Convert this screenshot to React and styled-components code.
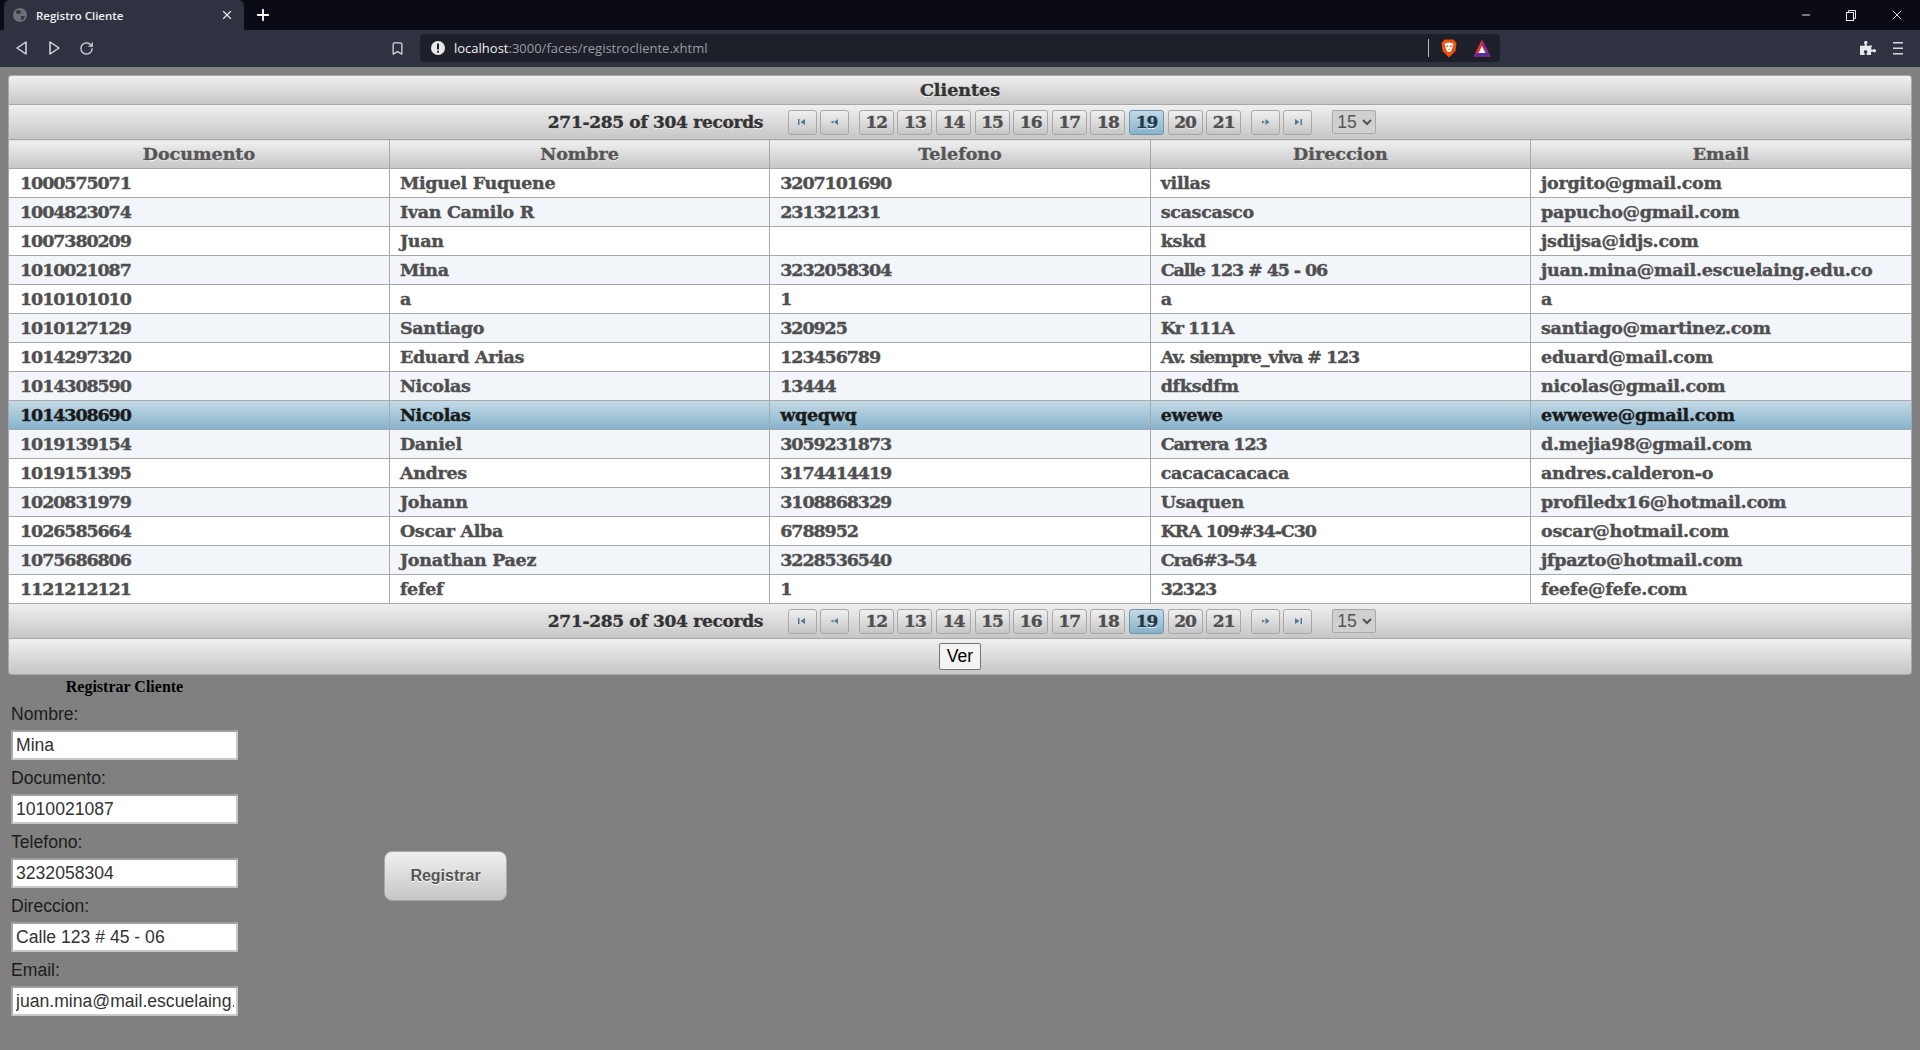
import React from "react";
import styled, { createGlobalStyle } from "styled-components";
import { X, Plus, RotateCw, Bookmark, Minus } from "lucide-react";
import { FaPuzzlePiece } from "react-icons/fa";

const GlobalStyle = createGlobalStyle`
  html, body {
    margin: 0;
    padding: 0;
    height: 100%;
    background: #808080;
    overflow: hidden;
  }
`;

const clients = [
  ["1000575071", "Miguel Fuquene", "3207101690", "villas", "jorgito@gmail.com"],
  ["1004823074", "Ivan Camilo R", "231321231", "scascasco", "papucho@gmail.com"],
  ["1007380209", "Juan", "", "kskd", "jsdijsa@idjs.com"],
  ["1010021087", "Mina", "3232058304", "Calle 123 # 45 - 06", "juan.mina@mail.escuelaing.edu.co"],
  ["1010101010", "a", "1", "a", "a"],
  ["1010127129", "Santiago", "320925", "Kr 111A", "santiago@martinez.com"],
  ["1014297320", "Eduard Arias", "123456789", "Av. siempre_viva # 123", "eduard@mail.com"],
  ["1014308590", "Nicolas", "13444", "dfksdfm", "nicolas@gmail.com"],
  ["1014308690", "Nicolas", "wqeqwq", "ewewe", "ewwewe@gmail.com"],
  ["1019139154", "Daniel", "3059231873", "Carrera 123", "d.mejia98@gmail.com"],
  ["1019151395", "Andres", "3174414419", "cacacacacaca", "andres.calderon-o"],
  ["1020831979", "Johann", "3108868329", "Usaquen", "profiledx16@hotmail.com"],
  ["1026585664", "Oscar Alba", "6788952", "KRA 109#34-C30", "oscar@hotmail.com"],
  ["1075686806", "Jonathan Paez", "3228536540", "Cra6#3-54", "jfpazto@hotmail.com"],
  ["1121212121", "fefef", "1", "32323", "feefe@fefe.com"],
];

const columns = ["Documento", "Nombre", "Telefono", "Direccion", "Email"];
const pages = [12, 13, 14, 15, 16, 17, 18, 19, 20, 21];
const fields = [
  ["Nombre:", "Mina"],
  ["Documento:", "1010021087"],
  ["Telefono:", "3232058304"],
  ["Direccion:", "Calle 123 # 45 - 06"],
  ["Email:", "juan.mina@mail.escuelaing.edu.co"],
];

const fatFont = `"DejaVu Serif", "Liberation Serif", serif`;
const barGradient = `linear-gradient(to bottom, #f0f0f0, #c6c6c6)`;

// digits in the original font are much narrower than its letters
const hasNarrowDigits = (value) => /\d/.test(value) && !value.includes("@");

function TriangleIcon({ flip }) {
  return (
    <svg width="14" height="16" viewBox="0 0 14 16" fill="none" stroke="#d8dae0" strokeWidth="1.5">
      <path d={flip ? "M3 2 L12 8 L3 14 Z" : "M11 2 L2 8 L11 14 Z"} strokeLinejoin="round" />
    </svg>
  );
}

function GlobeIcon() {
  return (
    <svg width="14" height="14" viewBox="0 0 14 14">
      <circle cx="7" cy="7" r="7" fill="#6d6f78" />
      <path d="M4 2 L8 3 L7 6 L4 6 L3 4 Z M8 8 L12 8 L10 12 L8 12 Z" fill="#33353f" />
    </svg>
  );
}

function InfoIcon() {
  return (
    <svg width="14" height="14" viewBox="0 0 14 14">
      <circle cx="7" cy="7" r="7" fill="#e8e8ea" />
      <rect x="6" y="2.5" width="2" height="6" rx="0.6" fill="#1d1f29" />
      <rect x="6" y="9.7" width="2" height="2" rx="0.6" fill="#1d1f29" />
    </svg>
  );
}

function LionIcon() {
  return (
    <svg width="16" height="19" viewBox="0 0 16 19">
      <path d="M3.5 0.5 H12.5 L15.5 4 L14.5 12 L8 18.5 L1.5 12 L0.5 4 Z" fill="#f0500f" />
      <path d="M3.5 4.5 L8 3.5 L12.5 4.5 L11 10 L9.5 13 H6.5 L5 10 Z" fill="#fff" />
      <path d="M5.5 6.5 H7.2 V8 H5.5 Z M8.8 6.5 H10.5 V8 H8.8 Z M7 10 H9 L8 11.5 Z" fill="#f0500f" />
    </svg>
  );
}

function RewardsIcon() {
  return (
    <svg width="18" height="18" viewBox="0 0 18 18">
      <path d="M9 0.5 L17.5 17.5 H0.5 Z" fill="#e8352e" />
      <path d="M9 0.5 L17.5 17.5 H11.5 L9 6 Z" fill="#8a2a8c" />
      <path d="M0.5 17.5 L2.5 14 H15.5 L17.5 17.5 Z" fill="#5e2a9c" />
      <path d="M9 7 L12.4 14 H5.6 Z" fill="#fff" />
    </svg>
  );
}

function RestoreIcon() {
  return (
    <svg width="10" height="11" viewBox="0 0 10 11" fill="none" stroke="#e8e8ea">
      <rect x="0.5" y="2.5" width="7" height="8" />
      <path d="M2.5 2.5 V0.5 H9.5 V8.5 H7.5" />
    </svg>
  );
}

function MenuIcon() {
  return (
    <svg width="10" height="13" viewBox="0 0 10 13" fill="#d8dae0">
      <rect y="0" width="10" height="1.5" />
      <rect y="5.5" width="10" height="1.5" />
      <rect y="11" width="10" height="1.5" />
    </svg>
  );
}

function SeekIcon({ kind }) {
  const paths = {
    first: "M2 2 H3.5 V8 H2 Z M9 2 V8 L4.5 5 Z",
    prev: "M10 2 V8 L6 5 Z M5.5 3.5 V6.5 L2.5 5 Z",
    next: "M2 3.5 V6.5 L5 5 Z M5.5 2 V8 L9.5 5 Z",
    last: "M3 2 V8 L7.5 5 Z M8.5 2 H10 V8 H8.5 Z",
  };
  return (
    <svg width="12" height="10" viewBox="0 0 12 10">
      <path d={paths[kind]} fill="#4d7a99" />
    </svg>
  );
}

function Paginator() {
  return (
    <PagerBar>
      <Records>271-285 of 304 records</Records>
      <NavGroup>
        <NavButton><SeekIcon kind="first" /></NavButton>
        <NavButton><SeekIcon kind="prev" /></NavButton>
      </NavGroup>
      <PageGroup>
        {pages.map((p) => (
          <PageButton key={p} $active={p === 19}>{p}</PageButton>
        ))}
      </PageGroup>
      <NavGroup>
        <NavButton><SeekIcon kind="next" /></NavButton>
        <NavButton><SeekIcon kind="last" /></NavButton>
      </NavGroup>
      <RowsSelect defaultValue="15">
        <option>5</option>
        <option>15</option>
        <option>30</option>
      </RowsSelect>
    </PagerBar>
  );
}

function App() {
  return (
    <>
      <GlobalStyle />
      <Browser>
        <TabStrip>
          <Tab>
            <GlobeIcon />
            <TabTitle>Registro Cliente</TabTitle>
            <X size={14} color="#e8e8ea" />
          </Tab>
          <NewTab><Plus size={18} color="#fff" strokeWidth={2.4} /></NewTab>
          <WindowControls>
            <Minus size={12} color="#e8e8ea" />
            <RestoreIcon />
            <X size={16} color="#e8e8ea" strokeWidth={1.4} />
          </WindowControls>
        </TabStrip>
        <Toolbar>
          <NavIcons>
            <TriangleIcon />
            <TriangleIcon flip />
            <RotateCw size={15} color="#d8dae0" />
          </NavIcons>
          <BookmarkSlot><Bookmark size={15} color="#d8dae0" /></BookmarkSlot>
          <UrlBar>
            <InfoIcon />
            <UrlText>localhost<UrlRest>:3000/faces/registrocliente.xhtml</UrlRest></UrlText>
            <UrlDivider />
            <LionIcon />
            <RewardsSlot><RewardsIcon /></RewardsSlot>
          </UrlBar>
          <ToolbarRight>
            <FaPuzzlePiece size={16} color="#e8e8ea" />
            <MenuIcon />
          </ToolbarRight>
        </Toolbar>
      </Browser>

      <Page>
        <Panel>
          <PanelTitle>Clientes</PanelTitle>
          <Paginator />
          <Table>
            <thead>
              <tr>
                {columns.map((c) => <HeadCell key={c}>{c}</HeadCell>)}
              </tr>
            </thead>
            <tbody>
              {clients.map((row, i) => (
                <Row key={row[0]} $even={i % 2 === 1} $selected={row[0] === "1014308690"}>
                  {row.map((value, j) => <Cell key={j} $tight={hasNarrowDigits(value)}>{value}</Cell>)}
                </Row>
              ))}
            </tbody>
          </Table>
          <Paginator />
          <PanelFooter><VerButton>Ver</VerButton></PanelFooter>
        </Panel>

        <FormArea>
          <FormColumn>
            <FormTitle>Registrar Cliente</FormTitle>
            {fields.map(([label, value]) => (
              <Field key={label}>
                <FieldLabel>{label}</FieldLabel>
                <FieldInput readOnly defaultValue={value} />
              </Field>
            ))}
          </FormColumn>
          <RegisterButton>Registrar</RegisterButton>
        </FormArea>
      </Page>
    </>
  );
}

const Browser = styled.header`
  display: flex;
  flex-direction: column;
  font-family: "Open Sans", "Noto Sans", sans-serif;
`;

const TabStrip = styled.div`
  height: 30px;
  background: #0a0b15;
  display: flex;
  align-items: flex-end;
  padding-left: 4px;
`;

const Tab = styled.div`
  width: 240px;
  height: 30px;
  box-sizing: border-box;
  background: #2f3241;
  border-radius: 6px 6px 0 0;
  display: flex;
  align-items: center;
  padding: 0 10px 0 9px;
  gap: 9px;
`;

const TabTitle = styled.span`
  flex: 1;
  color: #f0f0f2;
  font-size: 11.5px;
  font-weight: 600;
`;

const NewTab = styled.div`
  width: 38px;
  height: 30px;
  display: flex;
  align-items: center;
  justify-content: center;
`;

const WindowControls = styled.div`
  margin-left: auto;
  height: 30px;
  width: 120px;
  padding-right: 15px;
  box-sizing: border-box;
  display: flex;
  align-items: center;
  justify-content: space-between;
`;

const Toolbar = styled.div`
  height: 37px;
  background: #2f3241;
  display: flex;
  align-items: center;
  box-sizing: border-box;
  padding-bottom: 1px;
`;

const NavIcons = styled.div`
  width: 390px;
  box-sizing: border-box;
  padding-left: 15px;
  display: flex;
  align-items: center;
  gap: 18px;
`;

const BookmarkSlot = styled.div`
  width: 30px;
  display: flex;
`;

const UrlBar = styled.div`
  width: 1080px;
  height: 28px;
  box-sizing: border-box;
  background: #1d1f29;
  border-radius: 4px;
  display: flex;
  align-items: center;
  padding: 0 9px 0 11px;
`;

const UrlText = styled.span`
  flex: 1;
  margin-left: 9px;
  color: #f0f0f2;
  font-size: 13px;
`;

const UrlRest = styled.span`
  color: #9a9ca6;
`;

const UrlDivider = styled.span`
  width: 1px;
  height: 18px;
  background: #b8bac2;
  margin-right: 12px;
`;

const RewardsSlot = styled.span`
  display: flex;
  margin-left: 16px;
`;

const ToolbarRight = styled.div`
  margin-left: auto;
  width: 60px;
  padding-right: 17px;
  box-sizing: border-box;
  display: flex;
  align-items: center;
  justify-content: space-between;
`;

const Page = styled.main`
  padding: 8px 8px 0 8px;
  font-family: "Liberation Sans", Arial, sans-serif;
`;

const Panel = styled.section`
  border: 1px solid #a8a8a8;
  border-radius: 3px;
  overflow: hidden;
  display: flex;
  flex-direction: column;
`;

const PanelTitle = styled.h2`
  margin: 0;
  height: 28px;
  line-height: 28px;
  background: ${barGradient};
  border-bottom: 1px solid #a8a8a8;
  text-align: center;
  color: #333;
  font-family: ${fatFont};
  font-size: 17.5px;
  font-weight: 700;
  -webkit-text-stroke: 0.4px currentColor;
  text-shadow: 0 1px 0 #fff;
`;

const PagerBar = styled.div`
  height: 34px;
  box-sizing: border-box;
  background: ${barGradient};
  display: flex;
  align-items: center;
  justify-content: center;
  padding-left: 4px;
`;

const Records = styled.span`
  width: 215px;
  margin-right: 25px;
  white-space: nowrap;
  color: #333;
  font-family: ${fatFont};
  font-size: 17px;
  font-weight: 700;
  -webkit-text-stroke: 0.4px currentColor;
  text-shadow: 0 1px 0 #fff;
  letter-spacing: -0.3px;
`;

const NavGroup = styled.div`
  display: flex;
  gap: 3px;
`;

const PageGroup = styled.div`
  display: flex;
  gap: 3.6px;
  margin: 0 10px;
`;

const NavButton = styled.button`
  width: 29px;
  height: 25px;
  padding: 0;
  border: 1px solid #a8a8a8;
  border-radius: 3px;
  background: ${barGradient};
  display: flex;
  align-items: center;
  justify-content: center;
`;

const PageButton = styled.button`
  width: 35px;
  height: 25px;
  padding: 0;
  border: 1px solid ${(p) => (p.$active ? "#7096ab" : "#a8a8a8")};
  border-radius: 3px;
  background: ${(p) => (p.$active ? "linear-gradient(to bottom, #c4dae6, #85b2cb)" : barGradient)};
  color: ${(p) => (p.$active ? "#1f3a4d" : "#4f4f4f")};
  font-family: ${fatFont};
  font-size: 17px;
  font-weight: 700;
  letter-spacing: -1px;
  -webkit-text-stroke: 0.4px currentColor;
  text-shadow: 0 1px 0 #fff;
`;

const RowsSelect = styled.select`
  width: 44px;
  height: 24px;
  margin-left: 20px;
  padding: 0;
  box-sizing: border-box;
  border: 1px solid #a8a8a8;
  border-radius: 2px;
  background: #d0d0d0;
  color: #555;
  font-family: "Liberation Sans", Arial, sans-serif;
  font-size: 17.6px;
`;

const Table = styled.table`
  width: 100%;
  table-layout: fixed;
  border-collapse: collapse;
  border-top: 1px solid #a8a8a8;
  border-bottom: 1px solid #a8a8a8;
`;

const HeadCell = styled.th`
  height: 28px;
  padding: 0;
  background: ${barGradient};
  border-left: 1px solid #a8a8a8;
  border-bottom: 1px solid #a8a8a8;
  color: #555;
  font-family: ${fatFont};
  font-size: 17.5px;
  font-weight: 700;
  -webkit-text-stroke: 0.4px currentColor;
  text-shadow: 0 1px 0 #fff;
  &:first-child { border-left: 0; }
`;

const Row = styled.tr`
  background: ${(p) =>
    p.$selected
      ? "linear-gradient(to bottom, #c4dae6, #85b2cb)"
      : p.$even
      ? "#f2f5f9"
      : "#fff"};
  color: ${(p) => (p.$selected ? "#1a1a1a" : "#4f4f4f")};
`;

const Cell = styled.td`
  height: 29px;
  padding: 0 0 0 10px;
  box-sizing: border-box;
  border-left: 1px solid #a8a8a8;
  border-bottom: 1px solid #a8a8a8;
  font-family: ${fatFont};
  font-size: 17.5px;
  font-weight: 700;
  letter-spacing: ${(p) => (p.$tight ? "-1.1px" : "-0.3px")};
  -webkit-text-stroke: 0.4px currentColor;
  white-space: nowrap;
  overflow: hidden;
  &:first-child { border-left: 0; padding-left: 11px; }
  tr:last-child & { border-bottom: 0; }
`;

const PanelFooter = styled.div`
  height: 36px;
  box-sizing: border-box;
  background: ${barGradient};
  border-top: 1px solid #a8a8a8;
  display: flex;
  align-items: center;
  justify-content: center;
`;

const VerButton = styled.button`
  width: 42px;
  height: 27px;
  padding: 0;
  background: #f4f4f4;
  border: 1px solid #767676;
  border-radius: 2px;
  color: #000;
  font-family: "Liberation Sans", Arial, sans-serif;
  font-size: 17.6px;
`;

const FormArea = styled.div`
  display: flex;
  align-items: center;
  padding-left: 3px;
`;

const FormColumn = styled.div`
  width: 227px;
  display: flex;
  flex-direction: column;
`;

const FormTitle = styled.h3`
  margin: 3px 0 0;
  height: 18px;
  line-height: 18px;
  text-align: center;
  color: #000;
  font-family: "Liberation Serif", "Times New Roman", serif;
  font-size: 16px;
  font-weight: 700;
`;

const Field = styled.label`
  display: flex;
  flex-direction: column;
  height: 64px;
  box-sizing: border-box;
`;

const FieldLabel = styled.span`
  height: 34px;
  line-height: 36px;
  color: #1c1c1c;
  font-size: 17.6px;
`;

const FieldInput = styled.input`
  width: 227px;
  height: 30px;
  box-sizing: border-box;
  border: 2px solid #c8c8c8;
  border-top-color: #a0a0a0;
  border-left-color: #a8a8a8;
  border-radius: 2px;
  padding: 1px 2px 1px 3px;
  background: #fff;
  color: #333;
  font-family: "Liberation Sans", Arial, sans-serif;
  font-size: 17.6px;
`;

const RegisterButton = styled.button`
  width: 123px;
  height: 50px;
  margin-left: 146px;
  margin-top: 60px;
  background: ${barGradient};
  border: 1px solid #a8a8a8;
  border-radius: 8px;
  color: #555;
  font-family: "Liberation Sans", Arial, sans-serif;
  font-size: 16px;
  font-weight: 700;
  text-shadow: 0 1px 0 #fff;
`;

export default App;
